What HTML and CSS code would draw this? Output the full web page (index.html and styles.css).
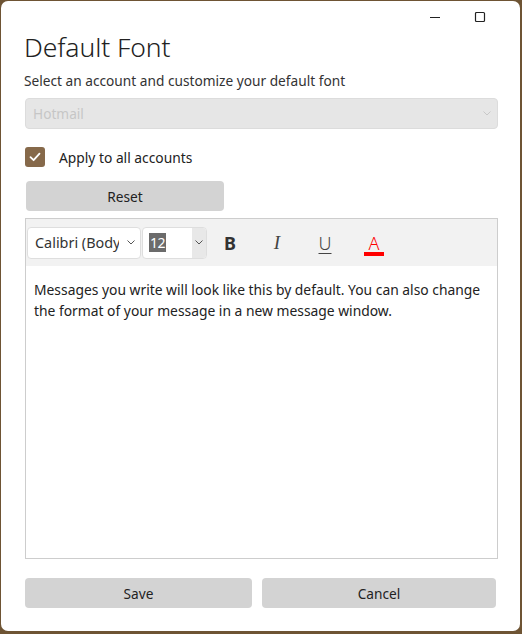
FILE: index.html
```html
<!DOCTYPE html>
<html lang="en">
<head>
<meta charset="utf-8">
<title>Default Font</title>
<link rel="stylesheet" href="styles.css">
</head>
<body>
<div class="window">
  <div class="titlebar">
    <span class="ctl ctl-min"><svg width="12" height="12" viewBox="0 0 12 12"><path d="M1 6.5h10" stroke="#222" stroke-width="1"/></svg></span>
    <span class="ctl ctl-max"><svg width="12" height="12" viewBox="0 0 12 12"><rect x="1.5" y="1.5" width="9" height="9" rx="1" fill="none" stroke="#222" stroke-width="1.2"/></svg></span>
  </div>
  <div class="content">
    <h1 class="title">Default Font</h1>
    <p class="subtitle">Select an account and customize your default font</p>
    <div class="account-select">
      <span class="account-value">Hotmail</span>
      <svg class="chev" width="8" height="5" viewBox="0 0 8 5"><path d="M0.5 0.5L4 4L7.5 0.5" fill="none" stroke="#c8c8c8" stroke-width="1"/></svg>
    </div>
    <label class="check-row">
      <span class="checkbox"><svg width="14" height="14" viewBox="0 0 14 14"><path d="M2.5 7.2L5.6 10.2L11.5 3.6" fill="none" stroke="#fff" stroke-width="1.8" stroke-linecap="round" stroke-linejoin="round"/></svg></span>
      <span class="check-label">Apply to all accounts</span>
    </label>
    <button class="btn btn-reset">Reset</button>
    <div class="editor">
      <div class="toolbar">
        <div class="font-select">
          <span class="font-value">Calibri (Body)</span>
          <svg class="chev-dark" width="8" height="5" viewBox="0 0 8 5"><path d="M0.5 0.5L4 4L7.5 0.5" fill="none" stroke="#555" stroke-width="1"/></svg>
        </div>
        <div class="size-select">
          <span class="size-value"><span class="size-hl">12</span></span>
          <span class="size-drop"><svg width="8" height="5" viewBox="0 0 8 5"><path d="M0.5 0.5L4 4L7.5 0.5" fill="none" stroke="#555" stroke-width="1"/></svg></span>
        </div>
        <span class="tb tb-bold">B</span>
        <span class="tb tb-italic">I</span>
        <span class="tb tb-under">U</span>
        <span class="tb tb-color">A</span>
      </div>
      <div class="editor-body">
        <p class="sample">Messages you write will look like this by default. You can also change the format of your message in a new message window.</p>
      </div>
    </div>
    <div class="actions">
      <button class="btn btn-save">Save</button>
      <button class="btn btn-cancel">Cancel</button>
    </div>
  </div>
</div>
</body>
</html>
```
FILE: styles.css
```css
* { box-sizing: border-box; }
html, body { margin: 0; padding: 0; }
body {
  width: 522px;
  height: 634px;
  background: #6e5434;
  padding: 1px 2px 3px 1px;
  font-family: "Segoe UI", "Noto Sans", "Open Sans", sans-serif;
  color: #222;
}
.window {
  width: 519px;
  height: 630px;
  background: #fff;
  border-radius: 7px;
  overflow: hidden;
}
.titlebar {
  height: 30px;
  display: flex;
  justify-content: flex-end;
  align-items: center;
  padding-right: 34px;
  padding-top: 2px;
}
.ctl { display: flex; width: 12px; height: 12px; }
.ctl-min { margin-right: 33px; }
.content {
  padding: 0 22px 0 23px;
}
.title {
  margin: 0;
  font-weight: 300;
  font-size: 26.5px;
  line-height: 32px;
  color: #222;
  letter-spacing: -0.1px;
}
.subtitle {
  margin: 9px 0 0;
  font-size: 13.7px;
  line-height: 18px;
  color: #333;
}
.account-select {
  margin: 8px 0 0 1px;
  height: 31px;
  background: #e6e6e6;
  border: 1px solid #dcdcdc;
  border-radius: 4px;
  display: flex;
  align-items: center;
  justify-content: space-between;
  padding: 0 6px 0 7px;
}
.account-value { font-size: 13.7px; color: #c6c6c6; }
.check-row {
  display: flex;
  align-items: center;
  margin: 18px 0 0 1px;
  height: 20px;
}
.checkbox {
  width: 20px;
  height: 20px;
  background: #86694a;
  border-radius: 3px;
  display: flex;
  align-items: center;
  justify-content: center;
}
.check-label {
  margin-left: 14px;
  font-size: 13.8px;
  color: #222;
}
.btn {
  font-family: inherit;
  font-size: 13.7px;
  color: #222;
  background: #d3d3d3;
  border: none;
  border-radius: 4px;
  height: 30px;
  padding: 0;
}
.btn-reset {
  display: block;
  margin: 14px 0 0 2px;
  width: 198px;
}
.editor {
  margin: 7px 0 0 1px;
  height: 341px;
  border: 1px solid #cdcdcd;
  display: flex;
  flex-direction: column;
}
.toolbar {
  height: 47px;
  background: #f2f2f2;
  display: flex;
  align-items: center;
  padding-left: 1px;
}
.font-select {
  width: 114px;
  height: 32px;
  background: #fff;
  border: 1px solid #dedede;
  border-radius: 4px;
  display: flex;
  align-items: center;
  justify-content: space-between;
  padding: 0 5px 0 7px;
  font-family: "Noto Sans", "Open Sans", sans-serif;
  font-size: 14.4px;
  color: #333;
  overflow: hidden;
  white-space: nowrap;
}
.font-value { width: 84px; overflow: hidden; }
.size-select {
  margin-left: 1px;
  width: 65px;
  height: 32px;
  background: #fff;
  border: 1px solid #dedede;
  border-radius: 4px;
  display: flex;
  align-items: stretch;
  overflow: hidden;
}
.size-value {
  flex: 1;
  display: flex;
  align-items: center;
  padding-left: 6px;
}
.size-hl {
  background: #6b6b6b;
  color: #fff;
  font-family: "Noto Sans", sans-serif;
  font-size: 14px;
  line-height: 19px;
  padding: 0 1px;
  letter-spacing: -0.5px;
}
.size-drop {
  width: 14px;
  background: #e8e8e8;
  display: flex;
  align-items: center;
  justify-content: center;
}
.tb {
  width: 48px;
  text-align: center;
  font-family: "Noto Sans", sans-serif;
  font-size: 18px;
  color: #444;
  line-height: 20px;
}
.tb-bold { font-weight: 700; width: 46px; color: #333; }
.tb-italic { font-style: italic; font-family: "Liberation Serif", serif; font-size: 19px; }
.tb-under { text-decoration: underline; text-underline-offset: 3px; text-decoration-thickness: 1px; font-weight: 300; }
.tb-color {
  color: #f00;
  font-weight: 300;
  width: 50px;
  position: relative;
}
.tb-color::after {
  content: "";
  position: absolute;
  left: 15px;
  width: 20px;
  top: 19px;
  height: 4px;
  background: #f00;
}
.editor-body {
  flex: 1;
  background: #fff;
  padding: 13px 8px;
}
.sample {
  margin: 0;
  font-family: "Noto Sans", "Open Sans", sans-serif;
  font-size: 13.85px;
  line-height: 21px;
  color: #222;
}
.actions {
  display: flex;
  gap: 10px;
  margin: 19px 0 0 1px;
}
.btn-save { width: 227px; }
.btn-cancel { width: 234px; }
```
